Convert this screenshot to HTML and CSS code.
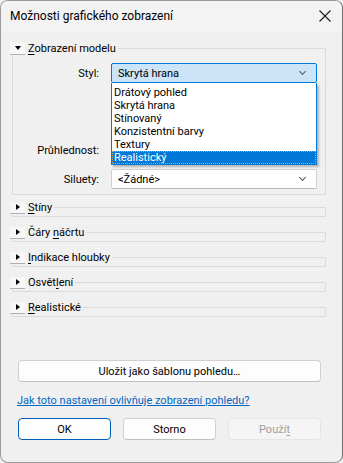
FILE: index.html
```html
<!DOCTYPE html>
<html lang="cs">
<head>
    <meta charset="UTF-8">
    <title>Možnosti grafického zobrazení</title>
    <link rel="stylesheet" href="styles.css">
</head>
<body>
    <div class="dialog">
        <div class="titlebar">
            <span class="title">Možnosti grafického zobrazení</span>
            <svg class="close" viewBox="0 0 12 12" width="12" height="12">
                <path d="M0.5 0.5L11.5 11.5M11.5 0.5L0.5 11.5" stroke="#1a1a1a" stroke-width="1.1" fill="none"/>
            </svg>
        </div>

        <div class="content">
            <fieldset class="group open">
                <legend><span class="toggle down"></span><span><u>Z</u>obrazení modelu</span></legend>
                <div class="row">
                    <label>Styl:</label>
                    <div class="combo-wrap">
                        <div class="combo active">Skrytá hrana<span class="chev"></span></div>
                        <ul class="dropdown">
                            <li>Drátový pohled</li>
                            <li>Skrytá hrana</li>
                            <li>Stínovaný</li>
                            <li>Konzistentní barvy</li>
                            <li>Textury</li>
                            <li class="selected">Realistický</li>
                        </ul>
                    </div>
                </div>
                <div class="row tall">
                    <label>Průhlednost:</label>
                    <div class="combo-space"></div>
                </div>
                <div class="row last">
                    <label>Siluety:</label>
                    <div class="combo">&lt;Žádné&gt;<span class="chev"></span></div>
                </div>
            </fieldset>

            <fieldset class="group"><legend><span class="toggle"></span><span><u>S</u>tíny</span></legend></fieldset>
            <fieldset class="group"><legend><span class="toggle"></span><span>Čáry <u>n</u>áčrtu</span></legend></fieldset>
            <fieldset class="group"><legend><span class="toggle"></span><span><u>I</u>ndikace hloubky</span></legend></fieldset>
            <fieldset class="group"><legend><span class="toggle"></span><span>Osvět<u>l</u>ení</span></legend></fieldset>
            <fieldset class="group"><legend><span class="toggle"></span><span><u>R</u>ealistické</span></legend></fieldset>

            <button class="btn wide">Uložit jako šablonu pohledu…</button>
            <a href="#" class="help">Jak toto nastavení ovlivňuje zobrazení pohledu?</a>

            <div class="actions">
                <button class="btn default">OK</button>
                <button class="btn">Storno</button>
                <button class="btn disabled">Použí<u>t</u></button>
            </div>
        </div>
    </div>
</body>
</html>
```

FILE: styles.css
```css
* {
    margin: 0;
    padding: 0;
    box-sizing: border-box;
}

body {
    font-family: Roboto, "Noto Sans", sans-serif;
    font-size: 11px;
    color: #000;
    background: #f0f0f0;
}

.dialog {
    width: 343px;
    height: 463px;
    background: #f0f0f0;
    border: 1px solid #9a9a9a;
    border-right-color: #6e6e6e;
    border-radius: 8px;
    overflow: hidden;
    display: flex;
    flex-direction: column;
}

.titlebar {
    height: 30px;
    display: flex;
    align-items: center;
    justify-content: space-between;
    padding: 0 11px 0 9px;
    background: #f3f3f3;
}

.title {
    font-size: 12px;
}

.content {
    padding: 10px 15px 0 11px;
    display: flex;
    flex-direction: column;
}

/* group boxes */
.group {
    border: 1px solid #dadada;
    border-radius: 1px;
    margin-right: 1px;
    height: 17px;
    margin-bottom: 8px;
}

.group legend {
    margin-left: -3px;
    padding-right: 2px;
    display: flex;
    align-items: center;
    line-height: 15px;
}

.group.open {
    height: auto;
    padding: 6px 0 4px;
    margin-bottom: 5px;
}

.toggle {
    width: 15px;
    height: 12px;
    border-bottom: 1px solid #b0b0b0;
    background: #f7f7f7;
    margin-right: 3px;
    display: flex;
    align-items: center;
    justify-content: center;
}

.toggle::after {
    content: "";
    border-left: 4px solid #000;
    border-top: 3px solid transparent;
    border-bottom: 3px solid transparent;
}

.toggle.down::after {
    border-top: 4px solid #000;
    border-left: 3.5px solid transparent;
    border-right: 3.5px solid transparent;
    border-bottom: 0;
}

u {
    text-decoration-thickness: 1px;
    text-underline-offset: 2px;
}

.row {
    display: flex;
    align-items: center;
    height: 22px;
    margin-bottom: 7px;
}

.row.tall {
    margin-top: 55px;
}

.row.last {
    margin-bottom: 0;
}

.row label {
    width: 86px;
    text-align: right;
    margin-right: 12px;
}

.combo-wrap {
    position: relative;
}

.combo {
    width: 206px;
    height: 20px;
    border: 1px solid #d0d0d0;
    border-bottom-color: #b8b8b8;
    border-radius: 2px;
    background: #fff;
    padding: 0 6px;
    display: flex;
    align-items: center;
    justify-content: space-between;
}

.combo.active {
    background: #cce4f7;
    border-color: #0078d7;
}

.combo-space {
    width: 206px;
}

.chev {
    width: 5px;
    height: 5px;
    border-right: 1px solid #555;
    border-bottom: 1px solid #555;
    transform: rotate(45deg);
    margin: -3px 5px 0 0;
}

.dropdown {
    position: absolute;
    left: 0;
    top: 20px;
    width: 206px;
    list-style: none;
    background: #fff;
    border: 1px solid #0078d7;
    border-top: 0;
    padding-top: 3px;
    box-shadow: 2px 2px 2px rgba(0, 0, 0, 0.25);
    z-index: 2;
}

.dropdown li {
    height: 13px;
    line-height: 13px;
    padding-left: 2px;
}

.dropdown li.selected {
    background: #0078d7;
    color: #fff;
    outline: 1px dotted #f0a030;
    outline-offset: -1px;
}

/* buttons */
.btn {
    font-family: inherit;
    font-size: 11px;
    height: 22px;
    border: 1px solid #d0d0d0;
    border-bottom-color: #c0c0c0;
    border-radius: 4px;
    background: #fdfdfd;
    color: #000;
}

.btn.wide {
    margin: 35px 6px 0 6px;
}

.help {
    margin: 12px 0 0 5px;
    color: #0067c0;
    text-decoration: underline;
}

.actions {
    display: flex;
    gap: 12px;
    margin: 11px 6px 0 6px;
}

.actions .btn {
    flex: 1;
}

.btn.default {
    border: 1px solid #005fb8;
}

.btn.disabled {
    background: #f5f5f5;
    border-color: #e5e5e5;
    color: #9d9d9d;
}
```
